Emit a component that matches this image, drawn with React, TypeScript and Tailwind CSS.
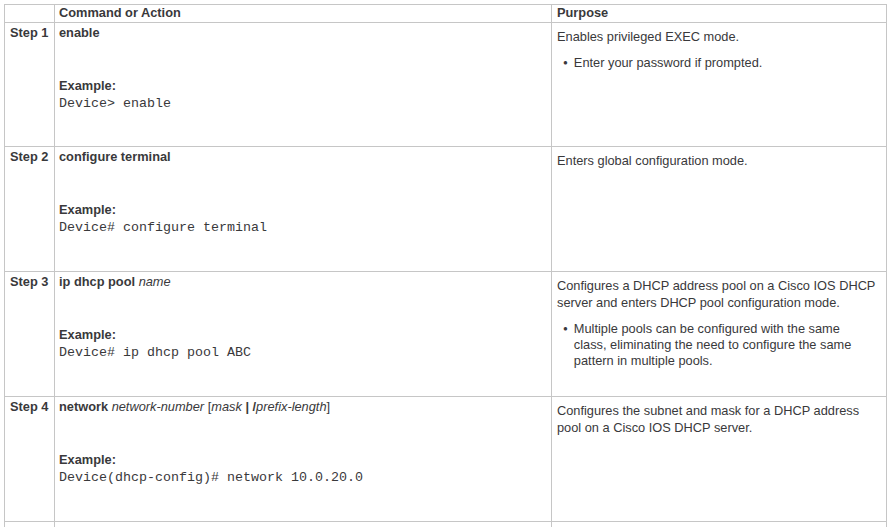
const sans = { fontFamily: '"Liberation Sans", Arial, sans-serif' };

type Step = {
  label: string;
  command: React.ReactNode;
  example?: string;
  purpose: string;
  bullet?: string;
};

const steps: Step[] = [
  {
    label: 'Step 1',
    command: <b>enable</b>,
    example: 'Device> enable',
    purpose: 'Enables privileged EXEC mode.',
    bullet: 'Enter your password if prompted.',
  },
  {
    label: 'Step 2',
    command: <b>configure terminal</b>,
    example: 'Device# configure terminal',
    purpose: 'Enters global configuration mode.',
  },
  {
    label: 'Step 3',
    command: (
      <>
        <b>ip dhcp pool</b> <i>name</i>
      </>
    ),
    example: 'Device# ip dhcp pool ABC',
    purpose: 'Configures a DHCP address pool on a Cisco IOS DHCP server and enters DHCP pool configuration mode.',
    bullet: 'Multiple pools can be configured with the same class, eliminating the need to configure the same pattern in multiple pools.',
  },
  {
    label: 'Step 4',
    command: (
      <>
        <b>network</b> <i>network-number</i> [<i>mask</i> <b>|</b> <b>/</b>
        <i>prefix-length</i>]
      </>
    ),
    example: 'Device(dhcp-config)# network 10.0.20.0',
    purpose: 'Configures the subnet and mask for a DHCP address pool on a Cisco IOS DHCP server.',
  },
  {
    label: 'Step 5',
    command: (
      <>
        <b>default-router</b> <i>address</i>
      </>
    ),
    purpose: '',
  },
];

export default function App() {
  return (
    <div className="w-[891px] h-[527px] overflow-hidden bg-white pl-[4px] pt-[4px]" style={sans}>
      <table className="border-collapse text-[12.8px] text-[#39393b] leading-[16px]">
        <thead>
          <tr className="h-[18px]">
            <th className="w-[50px] border border-[#c6c6c6] p-0" />
            <th className="w-[497px] border border-[#c6c6c6] px-[4px] py-0 text-left align-top font-bold">
              Command or Action
            </th>
            <th className="w-[335px] border border-[#c6c6c6] px-[5px] py-0 text-left align-top font-bold">
              Purpose
            </th>
          </tr>
        </thead>
        <tbody>
          {steps.map((s, i) => (
            <tr key={s.label} className={i === 0 ? 'h-[124px]' : 'h-[125px]'}>
              <td className="border border-[#c6c6c6] pl-[5px] pt-[2px] align-top font-bold whitespace-nowrap">
                {s.label}
              </td>
              <td className="border border-[#c6c6c6] pl-[4px] pt-[2px] align-top">
                <div>{s.command}</div>
                {s.example && (
                  <>
                    <div className="mt-[37px] font-bold">Example:</div>
                    <div
                      className="text-[13.33px] leading-[19px]"
                      style={{ fontFamily: '"Liberation Mono", "Courier New", monospace' }}
                    >
                      {s.example}
                    </div>
                  </>
                )}
              </td>
              <td className="border border-[#c6c6c6] pl-[5px] pr-[3px] pt-[5px] align-top">
                <div className="leading-[17px]">{s.purpose}</div>
                {s.bullet && (
                  <ul className="mt-[10px] pl-[6px] pr-[18px] leading-[16px]">
                    <li className="flex gap-[6px]">
                      <span className="text-[8px] leading-[16px]">●</span>
                      <span>{s.bullet}</span>
                    </li>
                  </ul>
                )}
              </td>
            </tr>
          ))}
        </tbody>
      </table>
    </div>
  );
}
